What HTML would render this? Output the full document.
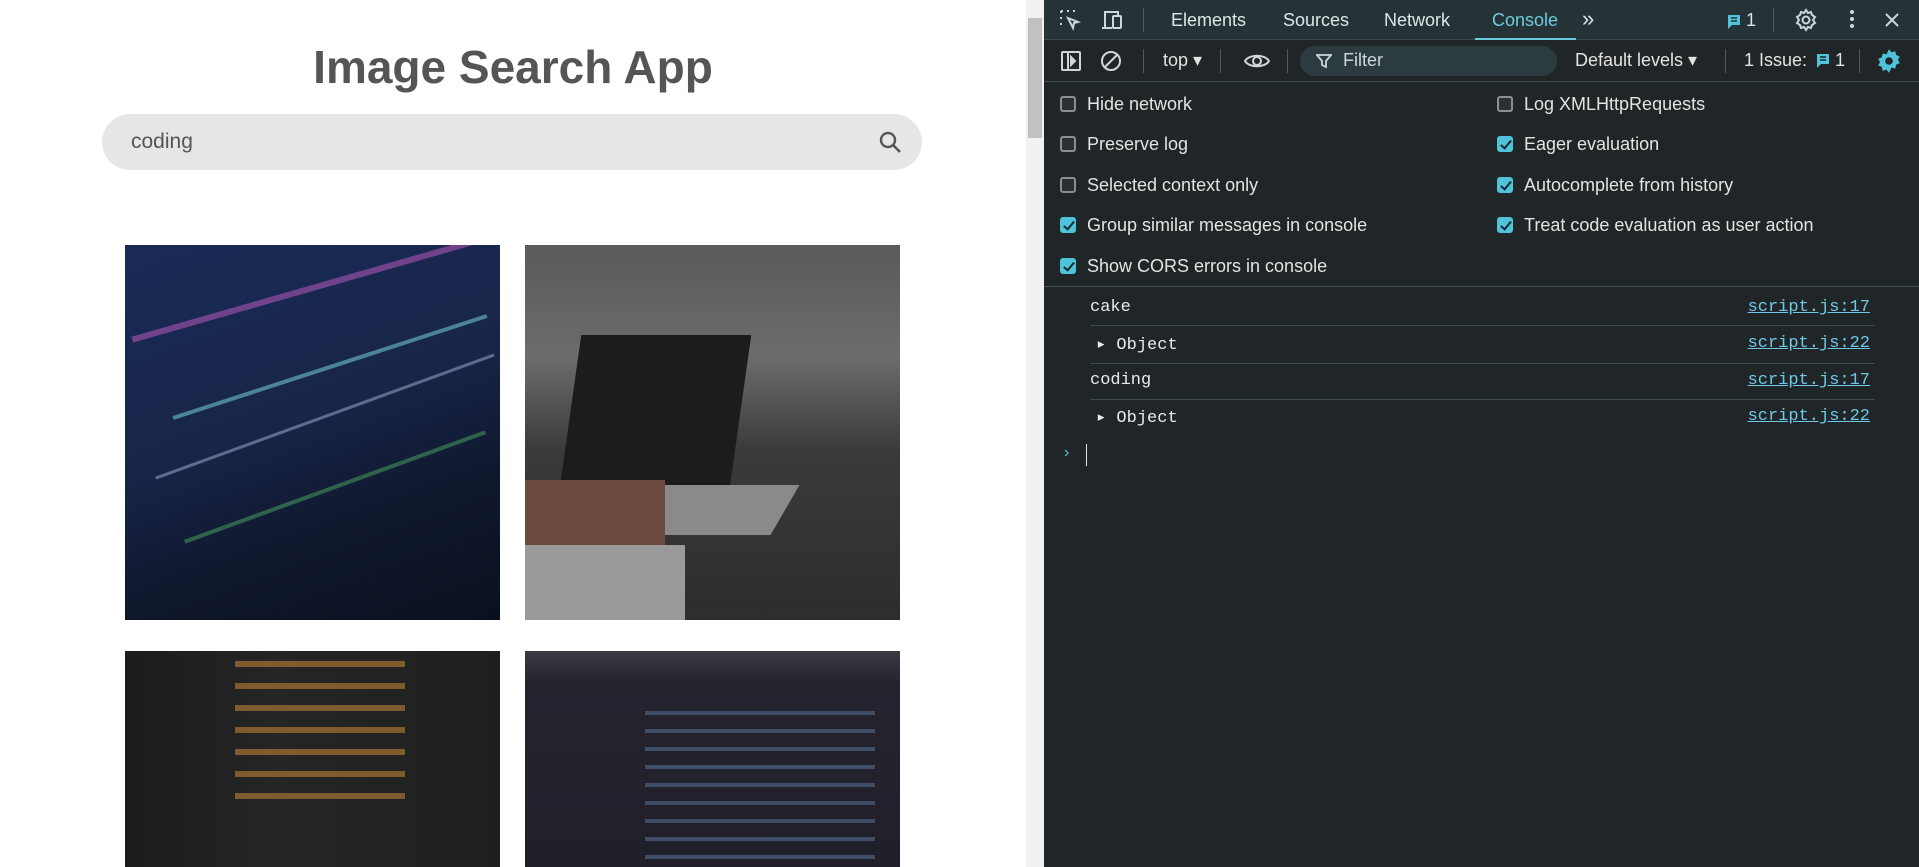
<!DOCTYPE html>
<html><head><meta charset="utf-8"><style>
*{box-sizing:border-box;margin:0;padding:0}
body{width:1919px;height:867px;overflow:hidden;position:relative;background:#fff;font-family:"Liberation Sans",sans-serif}
.abs{position:absolute}
h1{position:absolute;left:0;width:1026px;top:40px;text-align:center;font-size:46px;font-weight:bold;color:#555;letter-spacing:0px}
.search{left:102px;top:114px;width:820px;height:56px;border-radius:28px;background:#e6e6e6}
.search span{position:absolute;left:29px;top:16px;font-size:21px;color:#555}
.img{position:absolute;width:375px;height:375px;overflow:hidden}
.dt{left:1044px;top:0;width:875px;height:867px;background:#202528;color:#e3e3e3}
.top{left:0;top:0;width:875px;height:40px;background:#253337;border-bottom:1px solid #3a4a4f}
.tab{position:absolute;top:10px;font-size:18px;color:#dfe6e8}
.bar{left:0;top:40px;width:875px;height:42px;background:#202528;border-bottom:1px solid #3a4a4f}
.cb{position:absolute;width:16px;height:16px;border-radius:3px;border:2px solid #8a8f93;background:#2a2f33}
.cb.on{background:#4fc3d9;border-color:#4fc3d9}
.cb.on:after{content:"";position:absolute;left:4px;top:0px;width:4px;height:9px;border:solid #14292e;border-width:0 2px 2px 0;transform:rotate(40deg)}
.lbl{position:absolute;font-size:18px;color:#e3e3e3}
.msg{position:absolute;left:46px;width:785px;font-family:"Liberation Mono",monospace;font-size:17px;color:#e8eaed}
.link{position:absolute;right:49px;font-family:"Liberation Mono",monospace;font-size:17px;color:#6fc8e8;text-decoration:underline}
.hr{position:absolute;left:46px;width:785px;height:1px;background:#3d4a4e}
</style></head><body>
<h1>Image Search App</h1>
<div class="abs search"><span>coding</span>
<svg class="abs" style="left:776px;top:16px" width="26" height="26" viewBox="0 0 26 26"><circle cx="10" cy="10" r="7" fill="none" stroke="#555" stroke-width="2.4"/><path d="M15 15l7 7" stroke="#555" stroke-width="2.6"/></svg></div>

<div class="img" style="left:125px;top:245px;background:linear-gradient(160deg,#1a2a55 0%,#18254a 45%,#10182e 70%,#0b1020 100%)">
<div class="abs" style="left:0;top:40px;width:375px;height:6px;background:#c65cc8;opacity:.5;transform:rotate(-16deg)"></div>
<div class="abs" style="left:40px;top:120px;width:330px;height:4px;background:#7ee0e8;opacity:.5;transform:rotate(-18deg)"></div>
<div class="abs" style="left:20px;top:170px;width:360px;height:3px;background:#cdd7f0;opacity:.4;transform:rotate(-20deg)"></div>
<div class="abs" style="left:50px;top:240px;width:320px;height:4px;background:#5bd06a;opacity:.4;transform:rotate(-20deg)"></div>
</div>
<div class="img" style="left:525px;top:245px;background:linear-gradient(180deg,#5a5a5a 0%,#6c6c6c 30%,#3a3a3a 55%,#2d2d2d 100%)">
<div class="abs" style="left:45px;top:90px;width:170px;height:160px;background:#1a1c1e;transform:skewX(-8deg)"></div>
<div class="abs" style="left:80px;top:240px;width:180px;height:50px;background:#8a8a8a;transform:skewX(-30deg)"></div>
<div class="abs" style="left:0;top:235px;width:140px;height:120px;background:#6e4a3e"></div>
<div class="abs" style="left:0;top:300px;width:160px;height:75px;background:#9a9a9a"></div>
</div>
<div class="img" style="left:125px;top:651px;height:216px;background:linear-gradient(90deg,#1c1c1c,#252525 40%,#1f1f1f)">
<div class="abs" style="left:110px;top:10px;width:170px;height:140px;background:repeating-linear-gradient(180deg,#c98a3a 0 6px,transparent 6px 22px);opacity:.55"></div>
</div>
<div class="img" style="left:525px;top:651px;height:216px;background:linear-gradient(180deg,#3a3a44 0%,#24232e 15%,#201f2a 100%)">
<div class="abs" style="left:120px;top:60px;width:230px;height:150px;background:repeating-linear-gradient(180deg,#6d8fbf 0 4px,transparent 4px 18px);opacity:.4"></div>
</div>

<div class="abs" style="left:1026px;top:0;width:18px;height:867px;background:#f1f1f1"></div>
<div class="abs" style="left:1028px;top:18px;width:14px;height:120px;background:#c1c1c1"></div>

<div class="abs dt">
<div class="abs top">
<svg class="abs" style="left:15px;top:9px" width="22" height="22" viewBox="0 0 22 22" fill="none" stroke="#cfd6d9" stroke-width="2"><path d="M2 2h3M8 2h3M14 2h3M2 2v3M2 8v3M2 14v3" stroke-dasharray="2 2"/><path d="M9 9l10 4-4 1-1 5z"/></svg>
<svg class="abs" style="left:57px;top:9px" width="24" height="22" viewBox="0 0 24 22" fill="none" stroke="#cfd6d9" stroke-width="2"><path d="M4 18V3h13v3"/><rect x="12" y="7" width="8" height="12" rx="1"/><path d="M1 19h10"/></svg>
<div class="abs" style="left:99px;top:8px;width:1px;height:24px;background:#4a5a5f"></div>
<div class="tab" style="left:127px">Elements</div>
<div class="tab" style="left:239px">Sources</div>
<div class="tab" style="left:340px">Network</div>
<div class="tab" style="left:448px;color:#6ccbdd">Console</div>
<div class="abs" style="left:431px;top:38px;width:101px;height:2px;background:#6ccbdd"></div>
<div class="tab" style="left:538px;top:6px;font-size:22px">»</div>
<svg class="abs" style="left:682px;top:14px" width="16" height="16" viewBox="0 0 16 16"><path d="M2 1h12v10H6l-4 4z" fill="#4fc3d9"/><path d="M5 4h6M5 7h6" stroke="#253337" stroke-width="1.5"/></svg>
<div class="tab" style="left:702px">1</div>
<div class="abs" style="left:729px;top:8px;width:1px;height:24px;background:#4a5a5f"></div>
<svg class="abs" style="left:750px;top:8px" width="24" height="24" viewBox="0 0 24 24" fill="none" stroke="#cfd6d9" stroke-width="2"><circle cx="12" cy="12" r="3.5"/><path d="M12 2l2 3 3-1 1 3 3 2-2 3 2 3-3 2-1 3-3-1-2 3-2-3-3 1-1-3-3-2 2-3-2-3 3-2 1-3 3 1z"/></svg>
<div class="abs" style="left:806px;top:10px;width:4px;height:4px;border-radius:2px;background:#cfd6d9;box-shadow:0 7px 0 #cfd6d9,0 14px 0 #cfd6d9"></div>
<svg class="abs" style="left:840px;top:12px" width="16" height="16" viewBox="0 0 16 16" stroke="#cfd6d9" stroke-width="2"><path d="M2 2l12 12M14 2L2 14"/></svg>
</div>
<div class="abs bar">
<svg class="abs" style="left:16px;top:10px" width="22" height="22" viewBox="0 0 22 22" fill="none" stroke="#cfd6d9" stroke-width="2"><rect x="2" y="2" width="18" height="18" rx="1"/><path d="M8 2v18"/><path d="M11 7l4 4-4 4z" fill="#cfd6d9"/></svg>
<svg class="abs" style="left:55px;top:9px" width="24" height="24" viewBox="0 0 24 24" fill="none" stroke="#cfd6d9" stroke-width="2"><circle cx="12" cy="12" r="9"/><path d="M6 18L18 6"/></svg>
<div class="abs" style="left:99px;top:9px;width:1px;height:24px;background:#4a5a5f"></div>
<div class="lbl" style="left:119px;top:10px">top ▾</div>
<div class="abs" style="left:176px;top:9px;width:1px;height:24px;background:#4a5a5f"></div>
<svg class="abs" style="left:199px;top:11px" width="28" height="20" viewBox="0 0 28 20" fill="none" stroke="#cfd6d9" stroke-width="2"><path d="M2 10C6 3 22 3 26 10C22 17 6 17 2 10z"/><circle cx="14" cy="10" r="4"/></svg>
<div class="abs" style="left:243px;top:9px;width:1px;height:24px;background:#4a5a5f"></div>
<div class="abs" style="left:256px;top:6px;width:257px;height:30px;border-radius:15px;background:#2b3b40"></div>
<svg class="abs" style="left:272px;top:13px" width="16" height="16" viewBox="0 0 16 16" fill="none" stroke="#cfd6d9" stroke-width="1.8"><path d="M1 2h14l-5 6v6l-4-2V8z"/></svg>
<div class="lbl" style="left:299px;top:10px;color:#cfd6d9">Filter</div>
<div class="lbl" style="left:531px;top:10px">Default levels ▾</div>
<div class="abs" style="left:681px;top:9px;width:1px;height:24px;background:#4a5a5f"></div>
<div class="lbl" style="left:700px;top:10px">1 Issue:</div>
<svg class="abs" style="left:771px;top:13px" width="16" height="16" viewBox="0 0 16 16"><path d="M2 1h12v10H6l-4 4z" fill="#4fc3d9"/><path d="M5 4h6M5 7h6" stroke="#202528" stroke-width="1.5"/></svg>
<div class="lbl" style="left:791px;top:10px">1</div>
<div class="abs" style="left:815px;top:9px;width:1px;height:24px;background:#4a5a5f"></div>
<svg class="abs" style="left:832px;top:8px" width="26" height="26" viewBox="0 0 24 24"><path d="M12 1l2.3 3 3.5-1 .8 3.5 3.4 1.5-1.8 3 1.8 3-3.4 1.5-.8 3.5-3.5-1L12 23l-2.3-3-3.5 1-.8-3.5L2 16l1.8-3L2 10l3.4-1.5.8-3.5 3.5 1z" fill="#4fc3d9"/><circle cx="12" cy="12" r="3.5" fill="#202528"/></svg>
</div>

<div class="cb" style="left:16px;top:96px"></div><div class="lbl" style="left:43px;top:94px">Hide network</div>
<div class="cb" style="left:16px;top:136px"></div><div class="lbl" style="left:43px;top:134px">Preserve log</div>
<div class="cb" style="left:16px;top:177px"></div><div class="lbl" style="left:43px;top:175px">Selected context only</div>
<div class="cb on" style="left:16px;top:217px"></div><div class="lbl" style="left:43px;top:215px">Group similar messages in console</div>
<div class="cb on" style="left:16px;top:258px"></div><div class="lbl" style="left:43px;top:256px">Show CORS errors in console</div>
<div class="cb" style="left:453px;top:96px"></div><div class="lbl" style="left:480px;top:94px">Log XMLHttpRequests</div>
<div class="cb on" style="left:453px;top:136px"></div><div class="lbl" style="left:480px;top:134px">Eager evaluation</div>
<div class="cb on" style="left:453px;top:177px"></div><div class="lbl" style="left:480px;top:175px">Autocomplete from history</div>
<div class="cb on" style="left:453px;top:217px"></div><div class="lbl" style="left:480px;top:215px">Treat code evaluation as user action</div>
<div class="abs" style="left:0;top:286px;width:875px;height:1px;background:#3d5157"></div>

<div class="msg" style="top:298px">cake</div><div class="link" style="top:298px">script.js:17</div>
<div class="hr" style="top:325px"></div>
<div class="msg" style="top:334px;left:52px">▸ Object</div><div class="link" style="top:334px">script.js:22</div>
<div class="hr" style="top:363px"></div>
<div class="msg" style="top:371px">coding</div><div class="link" style="top:371px">script.js:17</div>
<div class="hr" style="top:399px"></div>
<div class="msg" style="top:407px;left:52px">▸ Object</div><div class="link" style="top:407px">script.js:22</div>
<div class="abs" style="left:20px;top:444px;color:#4fc3d9;font-size:16px">›</div>
<div class="abs" style="left:42px;top:444px;width:1px;height:22px;background:#e3e3e3"></div>
</div>
</body></html>
